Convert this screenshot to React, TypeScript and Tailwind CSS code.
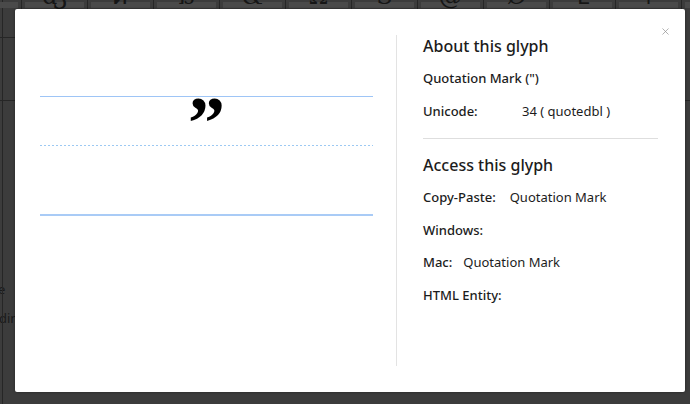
import { X } from 'lucide-react';

const topGlyphs = ['ƒ', 'ʤ', 'Ꮨ', 'ß', '&', 'Ω', 'Ŝ', '@', 'Ø', 'Ɬ', 'ǂ', 'ɮ'];

function Row({ label, value, gap }: { label: string; value?: string; gap: string }) {
  return (
    <div className="mt-[12.5px] flex h-5 items-center text-[13px] leading-5 text-[#1c1c1c]">
      <span className={`font-medium ${gap}`}>{label}</span>
      {value && <span>{value}</span>}
    </div>
  );
}

export default function App() {
  return (
    <div
      className="relative h-[404px] w-[690px] overflow-hidden bg-[#3c3c3c]"
      style={{ fontFamily: '"Noto Sans", "Open Sans", sans-serif' }}
    >
      {/* page behind the dimmed overlay */}
      <div className="absolute left-[2px] top-0 h-full border-l border-[#262626]" />
      <div className="flex h-[38px] -translate-x-[44px] border-b border-[#262626]">
        {topGlyphs.map((g, i) => (
          <div
            key={i}
            className="relative h-full w-[66px] shrink-0 overflow-hidden border-r border-[#262626]"
          >
            <div className="absolute inset-x-[3px] top-[2px] h-[6px] bg-[#4a4a4a]" />
            <span
              className="absolute left-1/2 top-[-16px] -translate-x-1/2 text-[24px] leading-none text-[#161616]"
              style={{ fontFamily: '"DejaVu Serif", serif' }}
            >
              {g}
            </span>
          </div>
        ))}
      </div>
      <div className="h-[63px] border-b border-[#262626]" />
      <div className="mt-[178px] text-[13px] leading-5 text-[#1a1a1a]">
        <div className="-ml-[2px]">e</div>
        <div className="mt-[9px] -ml-[1px]">din</div>
      </div>

      {/* modal */}
      <div className="absolute left-[15px] top-[9px] flex h-[383px] w-[670px] rounded-[2px] bg-white px-[25px] py-[26px] shadow-[0_0_3px_rgba(0,0,0,0.4)]">
        <button className="absolute right-[14px] top-[17px] text-[#8f8f8f]">
          <X size={11} strokeWidth={1.5} />
        </button>

        {/* glyph preview */}
        <div className="w-[333px] shrink-0 pt-[61px]">
          <div className="relative">
            <div className="border-t border-[#9ec5f6]" />
            <span
              className="absolute left-1/2 top-[-10px] -translate-x-1/2 text-[74px] font-bold leading-none text-black"
              style={{ fontFamily: '"Liberation Serif", serif' }}
            >
              ”
            </span>
            <div className="mt-[48px] h-px bg-[repeating-linear-gradient(90deg,#9cc9f3_0_2px,transparent_2px_4px)]" />
            <div className="mt-[68px] border-t-2 border-[#a9cbf6]" />
          </div>
        </div>

        <div className="ml-[23px] w-px self-stretch bg-[#e3e3e3]" />

        {/* info */}
        <div className="ml-[26px] w-[235px] shrink-0">
          <h2 className="text-[16px] font-medium leading-[22px] text-[#1c1c1c]">About this glyph</h2>
          <div className="mt-[11px] h-5 text-[13px] font-medium leading-5 text-[#1c1c1c]">Quotation Mark (")</div>
          <Row label="Unicode:" value="34 ( quotedbl )" gap="w-[99px]" />
          <div className="mt-[17px] border-t border-[#dedede]" />
          <h2 className="mt-[15px] text-[16px] font-medium leading-[22px] text-[#1c1c1c]">Access this glyph</h2>
          <div className="mt-[-1px]">
            <Row label="Copy-Paste:" value="Quotation Mark" gap="mr-[14px]" />
            <Row label="Windows:" gap="" />
            <Row label="Mac:" value="Quotation Mark" gap="mr-[11px]" />
            <Row label="HTML Entity:" gap="" />
          </div>
        </div>
      </div>
    </div>
  );
}
